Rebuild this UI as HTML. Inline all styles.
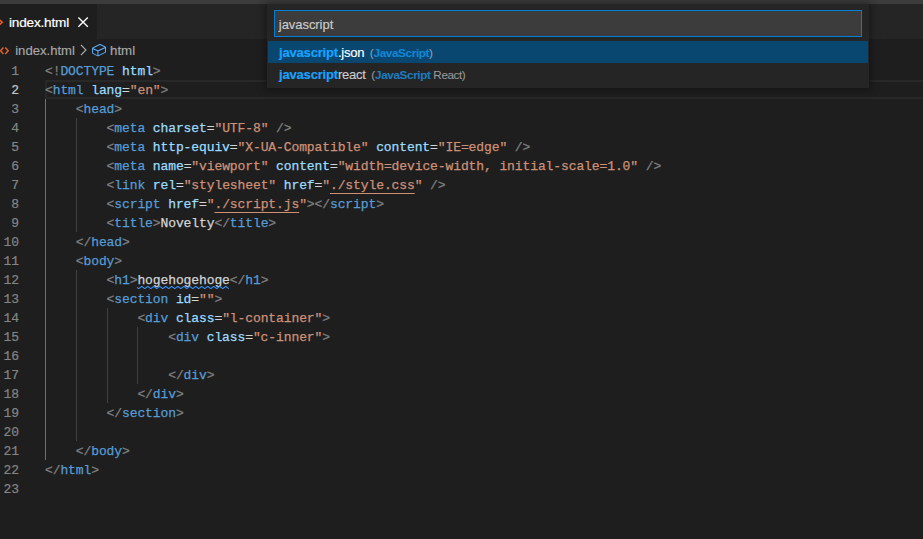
<!DOCTYPE html>
<html lang="en">
<head>
<meta charset="UTF-8">
<title>index.html</title>
<style>
html,body{margin:0;padding:0;}
body{width:923px;height:539px;background:#1e1e1e;overflow:hidden;position:relative;font-family:"Liberation Sans",sans-serif;}
.abs{position:absolute;}
#titlestrip{left:0;top:0;width:923px;height:4px;background:#3c3c3c;}
#tabbar{left:0;top:4px;width:923px;height:35px;background:#252526;}
#tab{left:0;top:4px;width:97px;height:35px;background:#1e1e1e;}
#tabtxt{-webkit-text-stroke:.2px;left:9px;top:14.9px;font-size:13.6px;letter-spacing:-.2px;line-height:16px;color:#ffffff;white-space:nowrap;}
#crumb{-webkit-text-stroke:.15px;left:15.2px;top:42.6px;font-size:13.1px;line-height:16px;color:#a9a9a9;white-space:nowrap;}
#crumb2{-webkit-text-stroke:.15px;left:110px;top:42.6px;font-size:13.3px;line-height:16px;color:#a9a9a9;white-space:nowrap;}
.ln{-webkit-text-stroke:.2px;position:absolute;left:0;width:18.9px;text-align:right;height:19px;line-height:19px;margin-top:1px;font-family:"Liberation Mono",monospace;font-size:13px;letter-spacing:-0.1px;color:#858585;}
.ln.cur{color:#c6c6c6;}
.cl{-webkit-text-stroke:.25px;position:absolute;height:19px;line-height:19px;margin-top:1px;margin-left:0;white-space:pre;font-family:"Liberation Mono",monospace;font-size:13px;letter-spacing:-0.1px;color:#d4d4d4;}
.gd{position:absolute;width:1px;height:19px;background:#404040;}
.ga{background:#707070;}
.t{color:#569cd6;}.a{color:#9cdcfe;}.s{color:#ce9178;}.g{color:#808080;}.w{color:#d4d4d4;}
.u{text-decoration:underline;text-decoration-thickness:1px;text-underline-offset:3.5px;text-decoration-skip-ink:none;}

#curline{left:45px;top:80px;width:900px;height:15px;border:2px solid #282828;}
#qp{left:267px;top:4px;width:602px;height:84px;background:#252526;box-shadow:0 0 8px 2px rgba(0,0,0,0.36);}
#qpin{left:274px;top:10px;width:586px;height:25px;background:#3c3c3c;border:1px solid #007fd4;box-sizing:border-box;width:588px;height:27px;}
#qpintxt{-webkit-text-stroke:.15px;letter-spacing:-.05px;left:278.8px;top:17px;font-size:13px;line-height:16px;color:#cccccc;white-space:nowrap;}
#row1{left:268px;top:41px;width:600px;height:22px;background:#094771;}
.rt{-webkit-text-stroke:.15px;font-size:13px;line-height:22px;margin-top:.6px;letter-spacing:-.22px;white-space:nowrap;color:#cccccc;}
.rt b{color:#18a3ff;font-weight:bold;letter-spacing:-.18px;}
.rt .d{-webkit-text-stroke:0;color:#cccccc;opacity:.7;font-size:11.7px;margin-left:2.2px;letter-spacing:-.2px;}
.rt .d b{color:#18a3ff;font-weight:bold;letter-spacing:-.36px;}
.rt .d i{font-style:normal;letter-spacing:-.42px;}
</style>
</head>
<body>
<div class="abs" id="titlestrip"></div>
<div class="abs" id="tabbar"></div>
<div class="abs" id="tab"></div>
<svg class="abs" style="left:0;top:16px" width="8" height="12" viewBox="0 0 8 12"><path d="M-1.2 3.2 L2.3 6.3 L-1.2 9.4" fill="none" stroke="#e0602f" stroke-width="1.5"/></svg>
<div class="abs" id="tabtxt">index.html</div>
<svg class="abs" style="left:77px;top:16px" width="12" height="12" viewBox="0 0 12 12"><path d="M1.4 1.4 L10.8 10.8 M10.8 1.4 L1.4 10.8" fill="none" stroke="#ffffff" stroke-width="1.35"/></svg>
<svg class="abs" style="left:0;top:44px" width="12" height="14" viewBox="0 0 12 14"><path d="M3.4 3.6 L0.6 6.8 L3.4 10 M5.2 3.6 L8.2 6.8 L5.2 10" fill="none" stroke="#e0602f" stroke-width="1.5"/></svg>
<div class="abs" id="crumb">index.html</div>
<svg class="abs" style="left:78.6px;top:44px" width="10" height="12" viewBox="0 0 10 12"><path d="M2 1 L7 6 L2 11" fill="none" stroke="#a9a9a9" stroke-width="1.1"/></svg>
<svg class="abs" style="left:90.6px;top:42px" width="16" height="16" viewBox="0 0 16 16"><path d="M14.45 4.5l-5-2.5h-.9l-7 3.5-.55.89v4.5l.55.9 5 2.5h.9l7-3.5.55-.9v-4.5l-.55-.89zm-8 8.64l-4.5-2.25V7.17l4.5 2v3.97zm.5-4.8L2.29 6.23l6.66-3.34 4.67 2.34-6.67 3.11zm7 1.55l-6.5 3.25V9.21l6.5-3v3.68z" fill="#5cb0ff"/></svg>
<div class="abs" id="crumb2">html</div>
<div class="abs" id="curline"></div>
<div class="ln" style="top:61px">1</div>
<div class="cl" style="top:61px;left:45.0px"><span class="g">&lt;!</span><span class="t">DOCTYPE</span><span class="a"> html</span><span class="g">&gt;</span></div>
<div class="ln cur" style="top:80px">2</div>
<div class="cl" style="top:80px;left:45.0px"><span class="g">&lt;</span><span class="t">html</span><span class="a"> lang</span><span class="w">=</span><span class="s">"en"</span><span class="g">&gt;</span></div>
<div class="ln" style="top:99px">3</div>
<i class="gd ga" style="top:99px;left:45px"></i>
<div class="cl" style="top:99px;left:75.8px"><span class="g">&lt;</span><span class="t">head</span><span class="g">&gt;</span></div>
<div class="ln" style="top:118px">4</div>
<i class="gd ga" style="top:118px;left:45px"></i>
<i class="gd" style="top:118px;left:76px"></i>
<div class="cl" style="top:118px;left:106.6px"><span class="g">&lt;</span><span class="t">meta</span><span class="a"> charset</span><span class="w">=</span><span class="s">"UTF-8"</span><span class="w"> </span><span class="g">/&gt;</span></div>
<div class="ln" style="top:137px">5</div>
<i class="gd ga" style="top:137px;left:45px"></i>
<i class="gd" style="top:137px;left:76px"></i>
<div class="cl" style="top:137px;left:106.6px"><span class="g">&lt;</span><span class="t">meta</span><span class="a"> http-equiv</span><span class="w">=</span><span class="s">"X-UA-Compatible"</span><span class="a"> content</span><span class="w">=</span><span class="s">"IE=edge"</span><span class="w"> </span><span class="g">/&gt;</span></div>
<div class="ln" style="top:156px">6</div>
<i class="gd ga" style="top:156px;left:45px"></i>
<i class="gd" style="top:156px;left:76px"></i>
<div class="cl" style="top:156px;left:106.6px"><span class="g">&lt;</span><span class="t">meta</span><span class="a"> name</span><span class="w">=</span><span class="s">"viewport"</span><span class="a"> content</span><span class="w">=</span><span class="s">"width=device-width, initial-scale=1.0"</span><span class="w"> </span><span class="g">/&gt;</span></div>
<div class="ln" style="top:175px">7</div>
<i class="gd ga" style="top:175px;left:45px"></i>
<i class="gd" style="top:175px;left:76px"></i>
<div class="cl" style="top:175px;left:106.6px"><span class="g">&lt;</span><span class="t">link</span><span class="a"> rel</span><span class="w">=</span><span class="s">"stylesheet"</span><span class="a"> href</span><span class="w">=</span><span class="s">"</span><span class="s u">./style.css</span><span class="s">"</span><span class="w"> </span><span class="g">/&gt;</span></div>
<div class="ln" style="top:194px">8</div>
<i class="gd ga" style="top:194px;left:45px"></i>
<i class="gd" style="top:194px;left:76px"></i>
<div class="cl" style="top:194px;left:106.6px"><span class="g">&lt;</span><span class="t">script</span><span class="a"> href</span><span class="w">=</span><span class="s">"</span><span class="s u">./script.js</span><span class="s">"</span><span class="g">&gt;&lt;/</span><span class="t">script</span><span class="g">&gt;</span></div>
<div class="ln" style="top:213px">9</div>
<i class="gd ga" style="top:213px;left:45px"></i>
<i class="gd" style="top:213px;left:76px"></i>
<div class="cl" style="top:213px;left:106.6px"><span class="g">&lt;</span><span class="t">title</span><span class="g">&gt;</span><span class="w">Novelty</span><span class="g">&lt;/</span><span class="t">title</span><span class="g">&gt;</span></div>
<div class="ln" style="top:232px">10</div>
<i class="gd ga" style="top:232px;left:45px"></i>
<div class="cl" style="top:232px;left:75.8px"><span class="g">&lt;/</span><span class="t">head</span><span class="g">&gt;</span></div>
<div class="ln" style="top:251px">11</div>
<i class="gd ga" style="top:251px;left:45px"></i>
<div class="cl" style="top:251px;left:75.8px"><span class="g">&lt;</span><span class="t">body</span><span class="g">&gt;</span></div>
<div class="ln" style="top:270px">12</div>
<i class="gd ga" style="top:270px;left:45px"></i>
<i class="gd" style="top:270px;left:76px"></i>
<div class="cl" style="top:270px;left:106.6px"><span class="g">&lt;</span><span class="t">h1</span><span class="g">&gt;</span><span class="w">hogehogehoge</span><span class="g">&lt;/</span><span class="t">h1</span><span class="g">&gt;</span></div>
<div class="ln" style="top:289px">13</div>
<i class="gd ga" style="top:289px;left:45px"></i>
<i class="gd" style="top:289px;left:76px"></i>
<div class="cl" style="top:289px;left:106.6px"><span class="g">&lt;</span><span class="t">section</span><span class="a"> id</span><span class="w">=</span><span class="s">""</span><span class="g">&gt;</span></div>
<div class="ln" style="top:308px">14</div>
<i class="gd ga" style="top:308px;left:45px"></i>
<i class="gd" style="top:308px;left:76px"></i>
<i class="gd" style="top:308px;left:107px"></i>
<div class="cl" style="top:308px;left:137.4px"><span class="g">&lt;</span><span class="t">div</span><span class="a"> class</span><span class="w">=</span><span class="s">"l-container"</span><span class="g">&gt;</span></div>
<div class="ln" style="top:327px">15</div>
<i class="gd ga" style="top:327px;left:45px"></i>
<i class="gd" style="top:327px;left:76px"></i>
<i class="gd" style="top:327px;left:107px"></i>
<i class="gd" style="top:327px;left:137px"></i>
<div class="cl" style="top:327px;left:168.2px"><span class="g">&lt;</span><span class="t">div</span><span class="a"> class</span><span class="w">=</span><span class="s">"c-inner"</span><span class="g">&gt;</span></div>
<div class="ln" style="top:346px">16</div>
<i class="gd ga" style="top:346px;left:45px"></i>
<i class="gd" style="top:346px;left:76px"></i>
<i class="gd" style="top:346px;left:107px"></i>
<i class="gd" style="top:346px;left:137px"></i>
<div class="ln" style="top:365px">17</div>
<i class="gd ga" style="top:365px;left:45px"></i>
<i class="gd" style="top:365px;left:76px"></i>
<i class="gd" style="top:365px;left:107px"></i>
<i class="gd" style="top:365px;left:137px"></i>
<div class="cl" style="top:365px;left:168.2px"><span class="g">&lt;/</span><span class="t">div</span><span class="g">&gt;</span></div>
<div class="ln" style="top:384px">18</div>
<i class="gd ga" style="top:384px;left:45px"></i>
<i class="gd" style="top:384px;left:76px"></i>
<i class="gd" style="top:384px;left:107px"></i>
<div class="cl" style="top:384px;left:137.4px"><span class="g">&lt;/</span><span class="t">div</span><span class="g">&gt;</span></div>
<div class="ln" style="top:403px">19</div>
<i class="gd ga" style="top:403px;left:45px"></i>
<i class="gd" style="top:403px;left:76px"></i>
<div class="cl" style="top:403px;left:106.6px"><span class="g">&lt;/</span><span class="t">section</span><span class="g">&gt;</span></div>
<div class="ln" style="top:422px">20</div>
<i class="gd ga" style="top:422px;left:45px"></i>
<i class="gd" style="top:422px;left:76px"></i>
<div class="ln" style="top:441px">21</div>
<i class="gd ga" style="top:441px;left:45px"></i>
<div class="cl" style="top:441px;left:75.8px"><span class="g">&lt;/</span><span class="t">body</span><span class="g">&gt;</span></div>
<div class="ln" style="top:460px">22</div>
<div class="cl" style="top:460px;left:45.0px"><span class="g">&lt;/</span><span class="t">html</span><span class="g">&gt;</span></div>
<div class="ln" style="top:479px">23</div>
<svg class="abs" style="left:137.3px;top:286px;overflow:hidden" width="92.4" height="3" viewBox="0 0 92.4 3"><polyline points="-1.25,0.4 1.75,2.6 4.75,0.4 7.75,2.6 10.75,0.4 13.75,2.6 16.75,0.4 19.75,2.6 22.75,0.4 25.75,2.6 28.75,0.4 31.75,2.6 34.75,0.4 37.75,2.6 40.75,0.4 43.75,2.6 46.75,0.4 49.75,2.6 52.75,0.4 55.75,2.6 58.75,0.4 61.75,2.6 64.75,0.4 67.75,2.6 70.75,0.4 73.75,2.6 76.75,0.4 79.75,2.6 82.75,0.4 85.75,2.6 88.75,0.4 91.75,2.6" fill="none" stroke="#3794ff" stroke-width="1.1"/></svg>
<div class="abs" id="qp"></div>
<div class="abs" id="qpin"></div>
<div class="abs" id="qpintxt">javascript</div>
<div class="abs" id="row1"></div>
<div class="abs rt" style="left:279px;top:41px;color:#fff"><b>javascript</b>.json <span class="d">(<b>JavaScript</b>)</span></div>
<div class="abs rt" style="left:279px;top:63px"><b>javascript</b>react <span class="d">(<b>JavaScript</b><i> React)</i></span></div>
</body>
</html>
